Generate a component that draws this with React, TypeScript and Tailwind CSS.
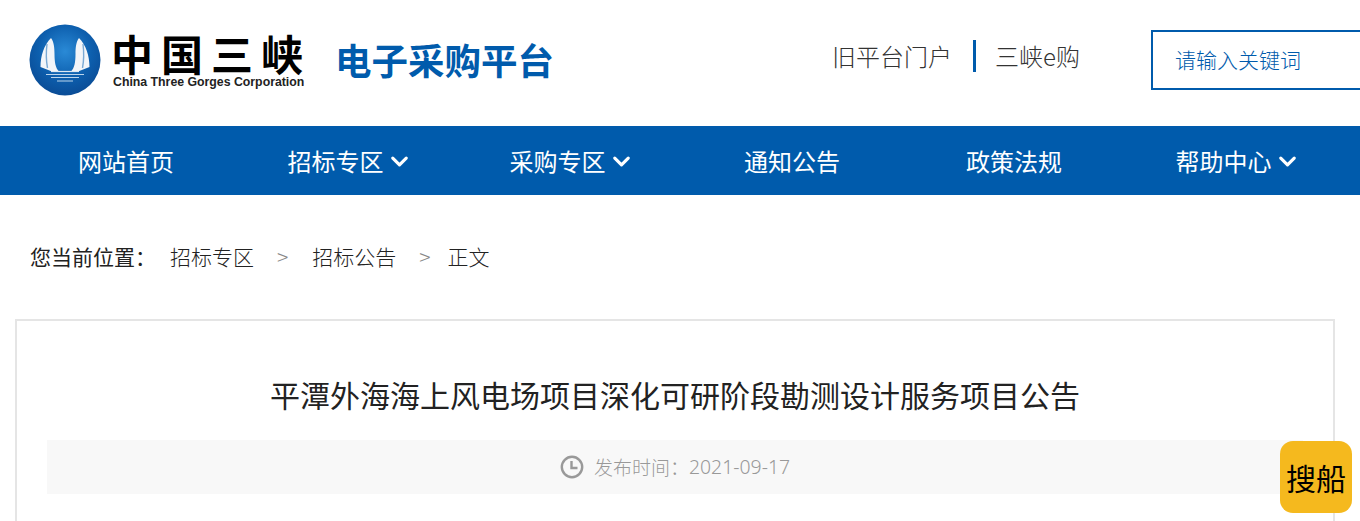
import { ChevronDown } from 'lucide-react';

const CJK = "font-['Noto_Sans_CJK_SC','Liberation_Sans',sans-serif]";

const NAV = [
  { label: '网站首页' },
  { label: '招标专区', arrow: true },
  { label: '采购专区', arrow: true },
  { label: '通知公告' },
  { label: '政策法规' },
  { label: '帮助中心', arrow: true },
];

function Logo() {
  return (
    <svg width="72" height="72" viewBox="0 0 72 72" className="shrink-0">
      <defs>
        <radialGradient id="ball" cx="50%" cy="38%" r="62%">
          <stop offset="0%" stopColor="#2a8ad6" />
          <stop offset="60%" stopColor="#0d5fae" />
          <stop offset="100%" stopColor="#0a4c96" />
        </radialGradient>
      </defs>
      <circle cx="36" cy="36" r="35.5" fill="url(#ball)" />
      <path d="M22 14 C15 21 11.5 32 11.5 43 L23 47.5 H30 C26.5 44 25.5 38 25.5 30 C25.5 24 25 18 22 14 Z" fill="#f2f5f9" />
      <path d="M50 14 C57 21 60.5 32 60.5 43 L49 47.5 H42 C45.5 44 46.5 38 46.5 30 C46.5 24 47 18 50 14 Z" fill="#f2f5f9" />
      <path d="M18 20 C17 28 17 36 18.5 44 M54 20 C55 28 55 36 53.5 44" stroke="#7aa9d4" strokeWidth="1.4" fill="none" />
      <path d="M22 47.5 H50" stroke="#dbe7f2" strokeWidth="1.2" />
      <path d="M17 50.5 H55 M22 53.5 H50 M28 57 H44" stroke="#bcd5ec" strokeWidth="1.2" />
    </svg>
  );
}

export default function App() {
  return (
    <div className={`${CJK} relative h-[521px] w-[1360px] overflow-hidden bg-white`}>
      {/* header */}
      <header className="flex h-[126px] items-center pb-[6px] pl-[29px]">
        <Logo />
        <div className="ml-[12px] flex w-[193px] shrink-0 flex-col">
          <span className="-ml-[2px] whitespace-nowrap text-[42px] font-bold leading-[41px] tracking-[8px] text-black">中国三峡</span>
          <span className="mt-[2px] whitespace-nowrap font-['Liberation_Sans',sans-serif] text-[12.3px] font-bold leading-[14px] text-[#222]">
            China Three Gorges Corporation
          </span>
        </div>
        <h1 className="ml-[29px] shrink-0 whitespace-nowrap text-[36.5px] font-bold leading-none text-[#005bac]">电子采购平台</h1>
        <div className="ml-[278px] -mt-[8px] flex shrink-0 items-center whitespace-nowrap text-[24px] leading-none text-[#333]">
          <span className="font-light">旧平台门户</span>
          <span className="ml-[21px] mr-[19px] h-[32px] w-[3px] bg-[#005bac]" />
          <span className="font-light">三峡e购</span>
        </div>
        <div className="ml-[71px] flex h-[60px] w-[260px] shrink-0 items-center border-2 border-[#005bac] pl-[22px] text-[21px] font-light text-[#005bac]">
          请输入关键词
        </div>
      </header>

      {/* nav */}
      <nav className="flex h-[69px] bg-[#005bac] pl-[15px] text-white">
        {NAV.map((n) => (
          <div key={n.label} className="flex w-[222px] items-center justify-center text-[24px]">
            <span className={n.arrow ? 'ml-[4px]' : ''}>{n.label}</span>
            {n.arrow && <ChevronDown size={27} strokeWidth={2.8} className="ml-[2px] mt-[2px]" />}
          </div>
        ))}
      </nav>

      {/* breadcrumb */}
      <div className="flex h-[124px] items-center pl-[30px] text-[21px] font-light text-[#222]">
        <span className="w-[140px] font-normal text-[#222]">您当前位置：</span>
        <span>招标专区</span>
        <span className="ml-[23px] mr-[24px] text-[#888]">&gt;</span>
        <span>招标公告</span>
        <span className="ml-[23px] mr-[17px] text-[#888]">&gt;</span>
        <span>正文</span>
      </div>

      {/* article card */}
      <main className="ml-[15px] h-[300px] w-[1320px] border-2 border-[#e5e5e5] px-[30px] pt-[48px]">
        <h2 className="text-center text-[30px] font-normal leading-[50px] text-[#222]">
          平潭外海海上风电场项目深化可研阶段勘测设计服务项目公告
        </h2>
        <div className="mt-[21px] flex h-[54px] items-center justify-center bg-[#f8f8f8] text-[19px] font-light text-[#999]">
          <svg width="24" height="24" viewBox="0 0 24 24" fill="none" stroke="#999" strokeWidth="2.4" className="mr-[10px]">
            <circle cx="12" cy="12" r="10.2" />
            <path d="M11.5 6 V13 H17.5" />
          </svg>
          <span>发布时间：</span>
          <span className="font-['Noto_Sans',sans-serif] text-[19.4px]">2021-09-17</span>
        </div>
      </main>

      {/* float badge */}
      <div className="absolute left-[1280px] top-[441px] flex h-[72px] w-[72px] items-center justify-center rounded-[13px] bg-[#f5b91e] text-[30px] font-normal text-black">
        搜船
      </div>
    </div>
  );
}
